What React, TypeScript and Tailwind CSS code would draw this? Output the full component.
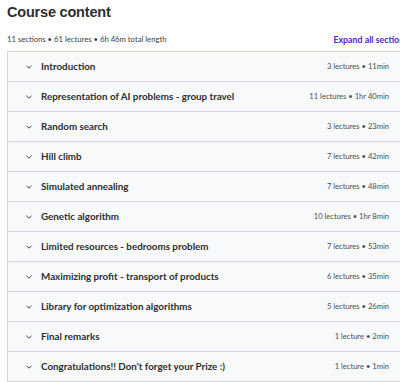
import React from "react";

const rows: [string, string][] = [
  ["Introduction", "3 lectures • 11min"],
  ["Representation of AI problems - group travel", "11 lectures • 1hr 40min"],
  ["Random search", "3 lectures • 23min"],
  ["Hill climb", "7 lectures • 42min"],
  ["Simulated annealing", "7 lectures • 48min"],
  ["Genetic algorithm", "10 lectures • 1hr 8min"],
  ["Limited resources - bedrooms problem", "7 lectures • 53min"],
  ["Maximizing profit - transport of products", "6 lectures • 35min"],
  ["Library for optimization algorithms", "5 lectures • 26min"],
  ["Final remarks", "1 lecture • 2min"],
  ["Congratulations!! Don't forget your Prize :)", "1 lecture • 1min"],
];

function Chevron() {
  return (
    <svg width="8" height="6" viewBox="0 0 8 6" className="shrink-0">
      <path d="M1.5 1.8 L4 4.2 L6.5 1.8" fill="none" stroke="#3e4143" strokeWidth="1" />
    </svg>
  );
}

export default function App() {
  return (
    <div className="w-[400px] h-[382px] overflow-hidden bg-white" style={{ fontFamily: "Lato, 'Open Sans', sans-serif" }}>
      <div className="w-[415px] pl-[7px] pr-[7px]">
        <h2
          className="text-[14.5px] leading-[22px] font-bold tracking-[-0.2px] text-[#2d2f31] pt-[1px]"
          style={{ fontFamily: "'Liberation Sans', Arial, sans-serif" }}
        >
          Course content
        </h2>
        <div className="flex items-center justify-between mt-[10px] h-[13px]">
          <span className="text-[7.7px] text-[#3e4143]">11 sections • 61 lectures • 6h 46m total length</span>
          <span className="text-[8.8px] font-bold text-[#5624d0]">Expand all sections</span>
        </div>
        <div className="mt-[5px] border border-[#d1d7dc] border-b-0">
          {rows.map(([t, m]) => (
            <div key={t} className="h-[30px] flex items-center bg-[#f7f9fa] border-b border-[#d1d7dc] pl-[17px] pr-[18px]">
              <Chevron />
              <span className="ml-[8px] text-[9.8px] font-bold text-[#2d2f31] flex-1">{t}</span>
              <span className="text-[7.6px] text-[#4a4e51]">{m}</span>
            </div>
          ))}
        </div>
      </div>
    </div>
  );
}
